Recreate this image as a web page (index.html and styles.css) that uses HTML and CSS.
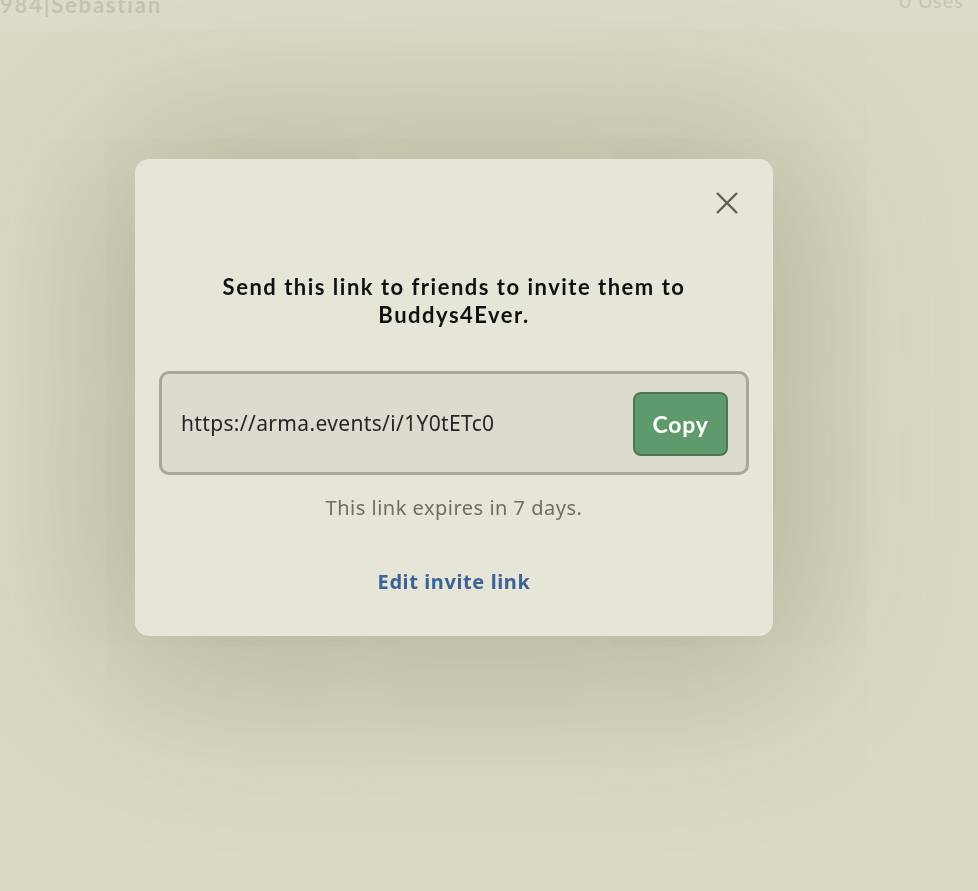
FILE: index.html
```html
<!DOCTYPE html>
<html>
<head>
<meta charset="utf-8">
<link rel="stylesheet" href="styles.css">
</head>
<body>
<header class="topbar">
  <span class="member">984|Sebastian</span>
  <span class="uses">0 Uses</span>
</header>
<div class="overlay">
  <div class="modal">
    <div class="modal-head">
      <button class="close" aria-label="Close">
        <svg width="24" height="24" viewBox="0 0 24 24"><path d="M2 2 L22 22 M22 2 L2 22" stroke="#5e5e59" stroke-width="2.4" fill="none"/></svg>
      </button>
    </div>
    <h2 class="title">Send this link to friends to invite them to Buddys4Ever.</h2>
    <div class="link-box">
      <span class="link-text">https://arma.events/i/1Y0tETc0</span>
      <button class="copy">Copy</button>
    </div>
    <p class="expires">This link expires in 7 days.</p>
    <a class="edit" href="#">Edit invite link</a>
  </div>
</div>
</body>
</html>
```
FILE: styles.css
```css
html, body {
  margin: 0;
  padding: 0;
  height: 100%;
}
body {
  background: #dcdac5;
  font-family: "Lato", "Noto Sans", sans-serif;
  overflow: hidden;
}
.topbar {
  display: flex;
  justify-content: space-between;
  align-items: flex-start;
  height: 40px;
  margin-top: -9px;
  padding: 0 14px 0 0;
  color: #c6c4b1;
  font-weight: 700;
  font-size: 22px;
  background: #dedcc9;
}
.member {
  letter-spacing: 1.8px;
}
.uses {
  font-weight: 400;
  font-size: 20px;
  letter-spacing: 1px;
  margin-top: -3px;
}
.overlay {
  position: fixed;
  inset: 0;
  display: flex;
  align-items: flex-start;
  padding: 159px 0 0 135px;
}
.modal {
  width: 638px;
  height: 477px;
  box-sizing: border-box;
  background: #e7e5d7;
  border-radius: 14px;
  box-shadow: 0 10px 170px 30px rgba(70, 70, 30, 0.28);
  padding: 32px 24px 0 24px;
  display: flex;
  flex-direction: column;
  align-items: center;
}
.modal-head {
  align-self: stretch;
  display: flex;
  justify-content: flex-end;
  padding-right: 10px;
}
.close {
  background: none;
  border: none;
  padding: 0;
  width: 24px;
  height: 24px;
  cursor: pointer;
}
.close svg { display: block; }
.title {
  margin: 58px 0 0 0;
  width: 540px;
  text-align: center;
  font-size: 22px;
  line-height: 28px;
  font-weight: 700;
  color: #111;
  letter-spacing: 1.5px;
}
.link-box {
  margin-top: 42px;
  align-self: stretch;
  height: 104px;
  box-sizing: border-box;
  border: 3px solid #a8a699;
  border-radius: 10px;
  background: #dddbcd;
  display: flex;
  align-items: center;
  justify-content: space-between;
  padding: 0 18px 0 19px;
}
.link-text {
  font-size: 21px;
  line-height: 28px;
  color: #262626;
  font-family: "Noto Sans", sans-serif;
  letter-spacing: 0.35px;
}
.copy {
  width: 95px;
  height: 64px;
  background: #5f9a6c;
  border: 2px solid #4a7556;
  border-radius: 8px;
  color: #fff;
  font-family: "Lato", sans-serif;
  font-weight: 700;
  font-size: 23px;
  letter-spacing: 0.8px;
  margin-top: 2px;
  padding: 0;
}
.expires {
  margin: 19px 0 0 0;
  font-family: "Noto Sans", sans-serif;
  font-size: 20px;
  line-height: 28px;
  letter-spacing: 0.5px;
  color: #6e6d66;
}
.edit {
  margin-top: 46px;
  font-family: "Noto Sans", sans-serif;
  font-size: 20px;
  line-height: 28px;
  font-weight: 700;
  letter-spacing: 0.6px;
  color: #3a6497;
  text-decoration: none;
}
```
